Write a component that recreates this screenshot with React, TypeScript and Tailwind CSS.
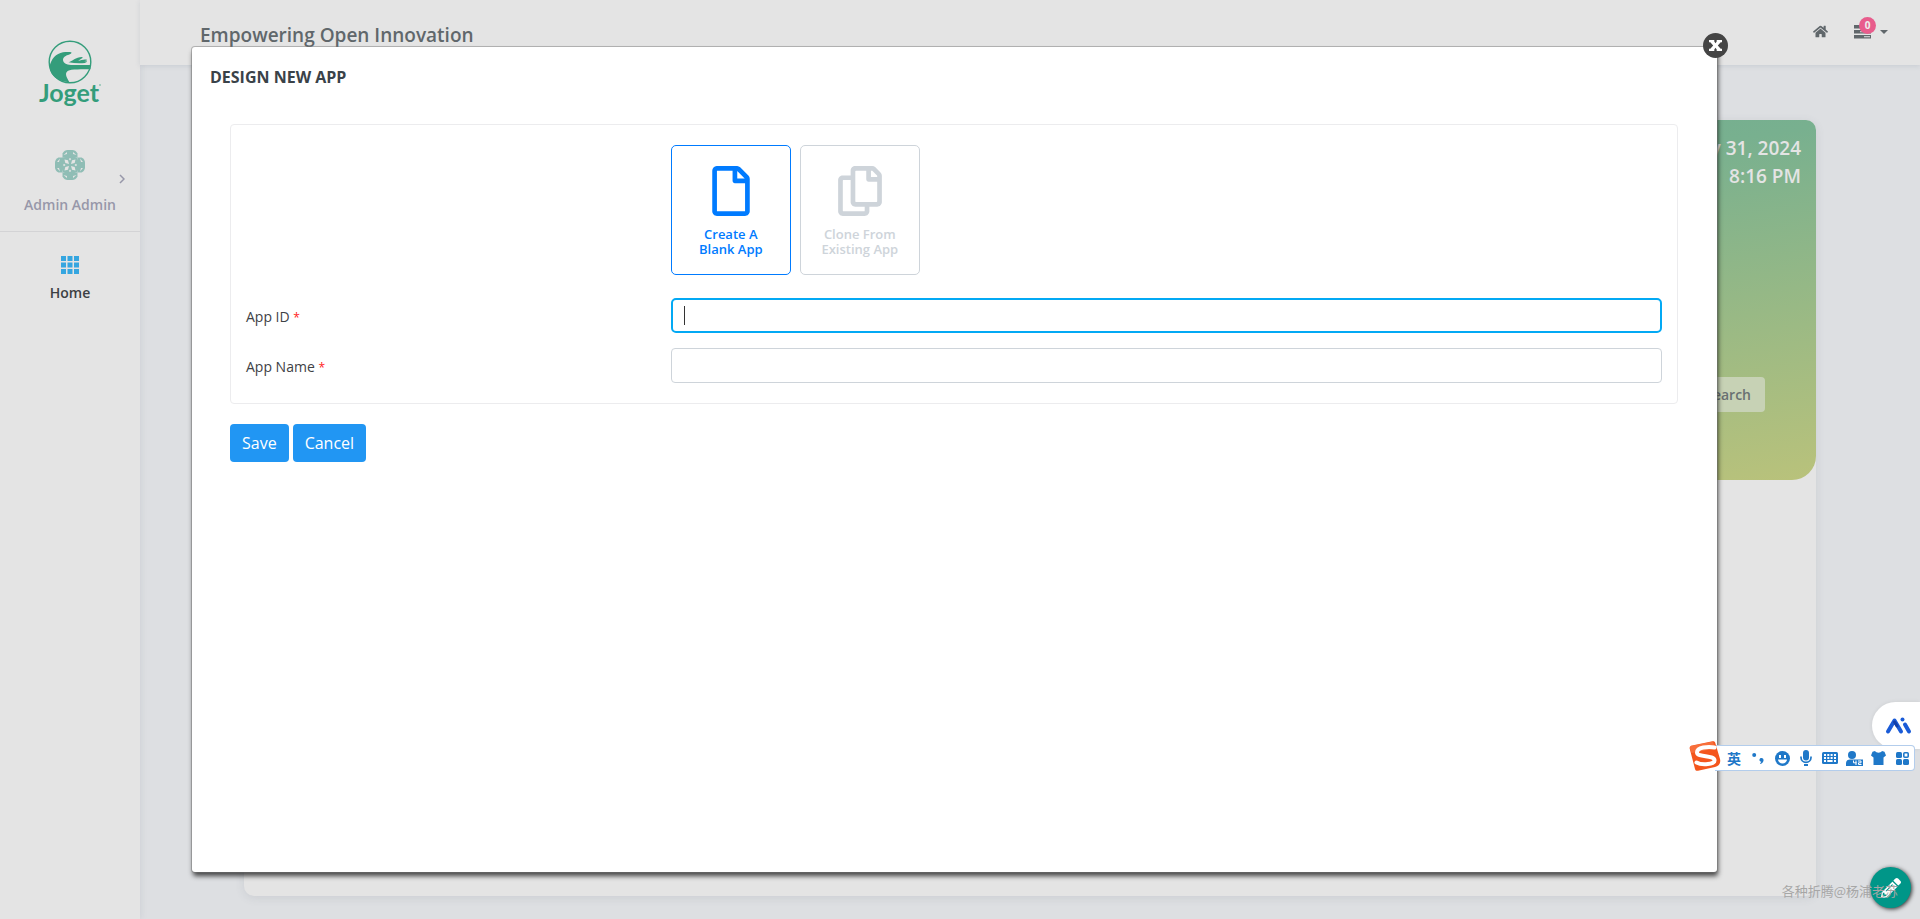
import { FaHome, FaPencilAlt, FaRegCopy, FaRegFile } from "react-icons/fa";

function JogetLogo() {
  return (
    <div className="flex flex-col items-center text-[#349d7b]">
      <svg width="44" height="44" viewBox="0 0 44 44" aria-hidden="true">
        <circle cx="22" cy="22" r="20.8" fill="none" stroke="currentColor" strokeWidth="1.4" />
        <path
          fill="currentColor"
          d="M1.500 27C3 19 8 13.500 15 12.300c3-.5 6-.6 8.300 0 .5.900-.5 1.600-2 2.200-3.500 1-6.300 2.500-6.300 5.500.3 3 3 4.700 8 5H42.500v4.300c-7-.2-14-.1-19 .5-5.500.9-6.500 3.500-4.500 8 .6 1.300 1.300 2.700 2.500 4.400C11 42 2 36 1.500 27z"
        />
        <path
          fill="currentColor"
          d="M20.500 22.300c4-1.200 7-4.900 13.500-5.300l.8.7-4.600 3.100c3-.6 5-1.700 8.300-1.200l.7.7-3 1c1.200-.1 2.200-.1 3 .4l-2.400 1.200c-5 .7-11 .2-16.300-.6z"
        />
      </svg>
      <span className="-mt-1 flex items-start font-['Lato',sans-serif] text-[25px] leading-6 font-bold">
        Joget
        <span className="mt-1 size-[2px] rounded-full bg-[#8fc4b3]" />
      </span>
    </div>
  );
}

const AVATAR_TURNS = [0, 90, 180, 270];

function Avatar() {
  return (
    <svg width="30" height="30" viewBox="0 0 30 30" aria-hidden="true">
      {AVATAR_TURNS.map((turn) => (
        <g key={turn} transform={`rotate(${turn} 15 15)`}>
          <path d="M7.500 3.500C8.500 1 11 0 12.500 0h5c1.500 0 4 1 5 3.500V10h-15z" fill="#8fbdb5" />
          <path d="M8.500 5l3.500-3v2zM21.500 5L18 2v2zM7.500 7.500l3 .5-2.500 2z" fill="#e4e4e4" />
        </g>
      ))}
      <rect x="8" y="8" width="14" height="14" fill="#8fbdb5" />
      {AVATAR_TURNS.map((turn) => (
        <g key={turn} transform={`rotate(${turn} 15 15)`} fill="#e4e4e4">
          <path d="M9.500 9.500l3.500.8 1 3.700L10.300 13z" />
          <path d="M13.800 9L15 8l1.200 1L15 10.500z" />
        </g>
      ))}
    </svg>
  );
}

function Sidebar() {
  return (
    <aside className="flex w-[140px] shrink-0 flex-col bg-[#e4e4e4] shadow-[1px_0_6px_rgba(120,130,150,0.15)]">
      <a href="#home" aria-label="Joget" className="mt-10 flex justify-center">
        <JogetLogo />
      </a>
      <button
        type="button"
        className="mt-[46px] grid h-[82px] grid-cols-[1fr_30px_1fr] grid-rows-[45px_20px] content-start items-start justify-items-center border-b border-[#d3d3d5] text-[#9797a9]"
      >
        <span />
        <Avatar />
        <svg width="6" height="10" viewBox="0 0 6 10" className="mt-6 ml-[18px]" fill="none" stroke="currentColor" strokeWidth="1.5" aria-hidden="true">
          <path d="M1 1l4 4-4 4" />
        </svg>
        <span className="col-span-3 text-sm leading-5 font-semibold">Admin Admin</span>
      </button>
      <a href="#home" className="mt-6 flex flex-col items-center gap-[9px] text-[#3c4043]">
        <svg width="18" height="18" viewBox="0 0 18 18" fill="#35a6e0" aria-hidden="true">
          <path d="M0 0h5v5H0zM6.500 0h5v5h-5zM13 0h5v5h-5zM0 6.500h5v5H0zM6.500 6.500h5v5h-5zM13 6.500h5v5h-5zM0 13h5v5H0zM6.500 13h5v5h-5zM13 13h5v5h-5z" />
        </svg>
        <span className="text-sm leading-5 font-semibold">Home</span>
      </a>
    </aside>
  );
}

function Header() {
  return (
    <header className="flex h-[65px] items-start justify-between bg-[#e4e4e4] pr-8 pl-[60px] text-[#60676b] shadow-[0_1px_5px_rgba(120,130,150,0.2)]">
      <h1 className="mt-[21px] text-[19px] leading-7 font-semibold">Empowering Open Innovation</h1>
      <nav className="mt-6 flex items-center gap-[26px]">
        <a href="#home" aria-label="Home">
          <FaHome size={15} />
        </a>
        <button type="button" aria-label="Tasks" className="relative flex items-center gap-[9px]">
          <svg width="17" height="14" viewBox="0 0 17 14" fill="currentColor" aria-hidden="true">
            <path fillRule="evenodd" d="M0 0h17v3.500H0zM0 5h17v3.500H0zM0 10h17v3.500H0zM10 11.200v1h6v-1zM6 6.200v1h10v-1z" />
          </svg>
          <span className="h-0 w-0 border-x-4 border-t-4 border-x-transparent border-t-current" />
          <span className="absolute -top-2 left-[5px] flex size-[17px] items-center justify-center rounded-full bg-[#e85c8c] text-[10px] font-bold text-[#eee]">
            0
          </span>
        </button>
      </nav>
    </header>
  );
}

function Dashboard() {
  return (
    <main className="flex flex-1 flex-col px-[104px] pt-[55px] pb-[23px]">
      <section className="flex-1 rounded-[10px] bg-[#e4e4e4] shadow-[0_2px_10px_rgba(80,90,110,0.12)]">
        <div className="flex h-[360px] flex-col items-end rounded-t-[10px] rounded-b-[24px] bg-[linear-gradient(171deg,#68aa92_0%,#78b08f_42%,#b9c27b_100%)] px-[15px] pt-[14px]">
          <p className="text-right text-[19px] leading-7 font-semibold text-[#e4e4e4]">
            May 31, 2024
            <br />
            8:16 PM
          </p>
          <button type="button" className="mt-[187px] mr-9 h-[35px] rounded bg-[#c7d2b5] px-[14px] text-sm font-semibold text-[#697072]">
            Search
          </button>
        </div>
      </section>
    </main>
  );
}

function Required() {
  return <span className="text-xs text-[#ff1a1a]">*</span>;
}

function DesignAppDialog() {
  return (
    <div
      role="dialog"
      aria-labelledby="dialog-title"
      className="absolute top-[47px] right-[203px] bottom-[47px] left-[192px] rounded-[3px] bg-white shadow-[0_0_0_1px_rgba(120,120,120,0.45),1px_4px_5px_rgba(0,0,0,0.7)]"
    >
      <button
        type="button"
        aria-label="Close"
        className="absolute -top-[14px] -right-[11px] flex size-[25px] items-center justify-center rounded-full bg-[#444]"
      >
        <svg width="13" height="11" viewBox="0 0 13 11" fill="#fff" aria-hidden="true">
          <path d="M0 0h5.300v1.500l1.200 1.700 1.200-1.700V0H13v2.200h-1.300L8.800 5.500l2.900 3.300H13V11H7.700V9.500L6.500 7.800 5.300 9.500V11H0V8.800h1.300l2.900-3.300-2.900-3.300H0z" />
        </svg>
      </button>
      <h2 id="dialog-title" className="px-[18px] pt-[18px] text-base leading-6 font-bold text-[#3a4248]">
        DESIGN NEW APP
      </h2>
      <form className="mt-[35px] mr-[39px] ml-[38px]">
        <div className="flex flex-col gap-[15px] rounded border border-[#ececee] px-[15px] pt-5 pb-5 text-sm text-[#3e4145]">
          <div className="mb-2 ml-[30%] flex gap-[9px] text-center text-[13px] leading-[15px] font-semibold">
            <button
              type="button"
              className="flex h-[130px] w-[120px] flex-col items-center rounded-[5px] border border-[#007bff] pt-5 text-[#007bff]"
            >
              <FaRegFile size={50} />
              <span className="mt-[11px]">
                Create A
                <br />
                Blank App
              </span>
            </button>
            <button
              type="button"
              className="flex h-[130px] w-[120px] flex-col items-center rounded-[5px] border border-[#ced4da] pt-5 text-[#ced4da]"
            >
              <FaRegCopy size={50} />
              <span className="mt-[11px]">
                Clone From
                <br />
                Existing App
              </span>
            </button>
          </div>
          <div className="flex items-center">
            <label htmlFor="app-id" className="w-[30%] pt-[3px]">
              App ID <Required />
            </label>
            <div className="flex h-[35px] w-[70%] items-center rounded-[5px] border-2 border-[#03a9f4] px-[11px]">
              <span className="h-[19px] w-px bg-[#333]" />
              <input id="app-id" type="text" className="min-w-0 flex-1 bg-transparent outline-none" />
            </div>
          </div>
          <div className="flex items-center">
            <label htmlFor="app-name" className="w-[30%] pt-[3px]">
              App Name <Required />
            </label>
            <input id="app-name" type="text" className="h-[35px] w-[70%] rounded border border-[#ced4da] px-3 outline-none" />
          </div>
        </div>
        <div className="mt-5 flex gap-1 text-base text-white">
          <button type="button" className="h-[38px] rounded bg-[#2196f3] px-3">
            Save
          </button>
          <button type="button" className="h-[38px] rounded bg-[#2196f3] px-3">
            Cancel
          </button>
        </div>
      </form>
    </div>
  );
}

function AiWidget() {
  return (
    <button
      type="button"
      aria-label="AI assistant"
      className="absolute top-[702px] right-0 flex h-[47px] w-12 items-center rounded-l-full bg-white pl-[13px] shadow-[0_0_4px_rgba(0,0,0,0.08)]"
    >
      <svg width="27" height="18" viewBox="0 0 27 18" fill="none" strokeLinecap="round" strokeWidth="4" aria-hidden="true">
        <path d="M3 14.500L9.500 3.500L16 14.500" stroke="#1a5bd7" strokeLinejoin="round" />
        <path d="M9.500 5L12 9" stroke="#123fa8" strokeWidth="3" />
        <path d="M20 7.500L24 14.500" stroke="#1a5bd7" />
        <circle cx="17.500" cy="2.500" r="2" fill="#1a5bd7" />
      </svg>
    </button>
  );
}

function InputMethodBar() {
  return (
    <div className="absolute top-[741px] right-[5px] flex items-center text-[#1f78c8]">
      <svg width="32" height="31" viewBox="0 0 32 31" className="z-10 -mr-[6px]" aria-hidden="true">
        <path d="M3 4.500L23.500.3c1.500-.3 2.500.3 2.800 1.700L31 18c1 4-1 7-5 8L9 29.800c-1.500.3-2.700-.4-3-1.800L.8 8C.4 6 1 5 3 4.500z" fill="#f4561d" />
        <path d="M2 5l22-4.500 2 7L2.500 12 .8 7z" fill="#fa7a48" opacity=".7" />
        <path d="M25.500 6.500C19 5 8 6.500 8 11.500s17 2.500 17.500 7.500C26 23.500 13 24.500 7.500 21.500" fill="none" stroke="#fff" strokeWidth="4" strokeLinecap="round" />
      </svg>
      <div className="mt-[3px] grid h-[26px] grid-cols-[repeat(8,24px)] place-items-center rounded-r-sm border-y border-r border-[#b3cdec] bg-white pl-[7px]">
        <span className="font-['Noto_Sans_CJK_SC',sans-serif] text-sm leading-5 font-bold">英</span>
        <svg width="12" height="12" viewBox="0 0 12 12" fill="currentColor" aria-hidden="true">
          <circle cx="2.200" cy="3" r="2" />
          <path d="M8 6.500c2-1.200 4 .2 3.500 2.300-.3 1.500-1.500 2.700-3 3.200l-.5-.7c.8-.4 1.200-1 1.300-1.600-1.700.2-2.500-2-1.300-3.200z" />
        </svg>
        <svg width="15" height="15" viewBox="0 0 15 15" aria-hidden="true">
          <circle cx="7.500" cy="7.500" r="7.500" fill="currentColor" />
          <path d="M4 4h2v3H4zM9 4h2v3H9zM3 8.500h9a4.500 4 0 0 1-9 0z" fill="#fff" />
        </svg>
        <svg width="12" height="16" viewBox="0 0 12 16" aria-hidden="true">
          <rect x="3" width="6" height="10.500" rx="3" fill="currentColor" />
          <path d="M1 6.500v1a5 4.800 0 0 0 10 0v-1M6 12v1" fill="none" stroke="currentColor" strokeWidth="1.700" />
          <path d="M4 14h4v2H4z" fill="currentColor" />
        </svg>
        <svg width="16" height="12" viewBox="0 0 16 12" aria-hidden="true">
          <rect width="16" height="12" rx="1.500" fill="currentColor" />
          <path
            d="M2 2h2v2H2zM5.300 2h2v2h-2zM8.600 2h2v2h-2zM12 2h2v2h-2zM2 5h2v2H2zM5.300 5h2v2h-2zM8.600 5h2v2h-2zM12 5h2v2h-2zM2 8h2v2H2zM5.300 8h5.300v2H5.300zM12 8h2v2h-2z"
            fill="#fff"
          />
        </svg>
        <svg width="17" height="15" viewBox="0 0 17 15" aria-hidden="true">
          <circle cx="6" cy="4" r="4" fill="currentColor" />
          <path d="M0 15v-3c0-2.500 2-3.500 4-3.500h13V15z" fill="currentColor" />
          <path d="M7.500 9.500v2.300h3M10 9.500v4.500M12 10h3v1.800h-2.500v1.700h3" fill="none" stroke="#fff" strokeWidth="1" />
        </svg>
        <svg width="15" height="14" viewBox="0 0 15 14" fill="currentColor" aria-hidden="true">
          <path d="M4 0c1.500 2.200 5.500 2.200 7 0l2.500.8L15 4.500 12.500 6.500V14h-10V6.500L0 4.500 1.500.8z" />
        </svg>
        <svg width="13" height="13" viewBox="0 0 13 13" fill="currentColor" aria-hidden="true">
          <rect width="6" height="6" rx="1.500" />
          <rect y="7" width="6" height="6" rx="1.500" />
          <rect x="7" y="7" width="6" height="6" rx="1.500" />
          <rect x="7.800" y=".8" width="4.400" height="4.400" rx="1" fill="none" stroke="currentColor" strokeWidth="1.600" />
        </svg>
      </div>
    </div>
  );
}

export default function App() {
  return (
    <div className="relative flex min-h-screen overflow-hidden bg-[#dddfe2] font-['Open_Sans',sans-serif]">
      <Sidebar />
      <div className="flex min-w-0 flex-1 flex-col">
        <Header />
        <Dashboard />
      </div>
      <DesignAppDialog />
      <AiWidget />
      <InputMethodBar />
      <button
        type="button"
        aria-label="Edit"
        className="absolute right-[9px] bottom-[11px] flex size-[41px] items-center justify-center rounded-full bg-[#009688] text-white shadow-[1px_1px_4px_rgba(0,0,0,0.8)]"
      >
        <FaPencilAlt size={20} />
      </button>
      <p className="absolute right-[22px] bottom-[18px] font-['Noto_Sans_CJK_SC',sans-serif] text-[13px] leading-5 text-[#a6a6a6]">
        各种折腾@杨浦老苏
      </p>
    </div>
  );
}
